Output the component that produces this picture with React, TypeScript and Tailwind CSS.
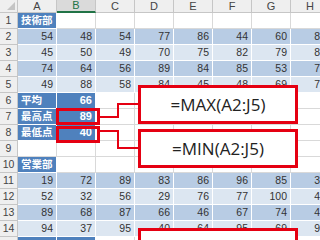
import React from "react";

const colLetters = ["A", "B", "C", "D", "E", "F", "G", "H"];

// rows 2-5 and 11-14 hold the score bands
const bandRows: Record<number, number[]> = {
  2: [54, 48, 54, 77, 86, 44, 60, 81],
  3: [45, 50, 49, 70, 75, 82, 79, 83],
  4: [74, 64, 56, 89, 84, 85, 53, 72],
  5: [49, 88, 58, 84, 45, 48, 69, 71],
  11: [19, 72, 89, 83, 86, 96, 85, 38],
  12: [52, 32, 56, 29, 76, 77, 100, 41],
  13: [89, 68, 87, 66, 46, 67, 74, 45],
  14: [94, 37, 95, 40, 64, 95, 69, 92],
};

// blue label cells: key = "row-col"
const labels: Record<string, string> = {
  "1-0": "技術部",
  "6-0": "平均",
  "6-1": "66",
  "7-0": "最高点",
  "7-1": "89",
  "8-0": "最低点",
  "8-1": "40",
  "10-0": "営業部",
  "15-0": "",
  "15-1": "",
};

function Cell({ row, col }: { row: number; col: number }) {
  const key = `${row}-${col}`;
  if (key in labels) {
    const text = labels[key];
    const isNum = col > 0;
    return (
      <div
        className={`flex items-center overflow-hidden whitespace-nowrap border-r border-b border-white bg-[#4f81bd] text-white font-bold leading-none ${
          isNum
            ? "justify-end pr-[3px] font-['Liberation_Sans',sans-serif] text-[11px]"
            : "justify-start pl-[3px] text-[10.5px]"
        }`}>
        {text}
      </div>
    );
  }
  const band = bandRows[row];
  if (band) {
    const dark = row === 2 || row === 4 || row === 11 || row === 13;
    return (
      <div
        className={`flex items-center justify-end whitespace-nowrap border-r border-b border-white pr-[3px] text-[10.5px] leading-none text-[#333] font-['Liberation_Sans',sans-serif] ${
          dark ? "bg-[#b8cce4]" : "bg-[#dce6f1]"
        }`}>
        {band[col]}
      </div>
    );
  }
  return <div className="border-r border-b border-[#d9d9d9] bg-white" />;
}

function Callout({ text, className }: { text?: string; className: string }) {
  return (
    <div
      className={`absolute left-[138px] w-[160px] h-[39px] flex items-center justify-center bg-white border-[3px] border-[#e50012] font-['Open_Sans',sans-serif] text-[17px] text-[#222] ${className}`}>
      {text}
    </div>
  );
}

export default function App() {
  const rows = Array.from({ length: 15 }, (_, i) => i + 1);

  return (
    <div className="relative w-[320px] h-[240px] overflow-hidden bg-white font-['Noto_Sans_CJK_JP',sans-serif]">
      <div className="grid grid-cols-[18px_repeat(8,39px)] grid-rows-[13px_repeat(15,16px)] w-[330px]">
        {/* corner */}
        <div className="relative border-r border-b border-[#c6c6c6] bg-[#efefef]">
          <svg className="absolute right-[2px] bottom-[2px]" width="8" height="8" viewBox="0 0 8 8">
            <path d="M8 0 L8 8 L0 8 Z" fill="#c4c4c4" />
          </svg>
        </div>
        {colLetters.map((l, i) => (
          <div
            key={l}
            className={`flex items-center justify-center text-[11px] leading-none font-['Liberation_Sans',sans-serif] border-r ${
              i === 1
                ? "bg-[#dadada] text-[#217346] border-b-2 border-b-[#217346] border-r-[#c6c6c6]"
                : "bg-[#efefef] text-[#444] border-b border-[#c6c6c6]"
            }`}>
            {l}
          </div>
        ))}
        {rows.map((r) => (
          <React.Fragment key={r}>
            <div className="flex items-center justify-center bg-[#efefef] border-r border-b border-[#c6c6c6] text-[10.5px] leading-none text-[#444] font-['Liberation_Sans',sans-serif]">
              {r}
            </div>
            {colLetters.map((_, c) => (
              <Cell key={c} row={r} col={c} />
            ))}
          </React.Fragment>
        ))}
      </div>

      {/* highlighted cells B7 / B8 */}
      <div className="absolute left-[56px] top-[108px] w-[44px] h-[17px] border-[3px] border-[#e50012]" />
      <div className="absolute left-[56px] top-[126px] w-[44px] h-[17px] border-[3px] border-[#e50012]" />

      {/* connectors */}
      <svg className="absolute left-0 top-0" width="320" height="240" viewBox="0 0 320 240">
        <path d="M100 117 H118 V104 H140" fill="none" stroke="#e50012" strokeWidth="2" />
        <path d="M100 131 H118 V148 H140" fill="none" stroke="#e50012" strokeWidth="2" />
      </svg>

      {/* callouts */}
      <Callout text="=MAX(A2:J5)" className="top-[85px]" />
      <Callout text="=MIN(A2:J5)" className="top-[129px]" />
      <Callout className="top-[228px]" />
    </div>
  );
}
